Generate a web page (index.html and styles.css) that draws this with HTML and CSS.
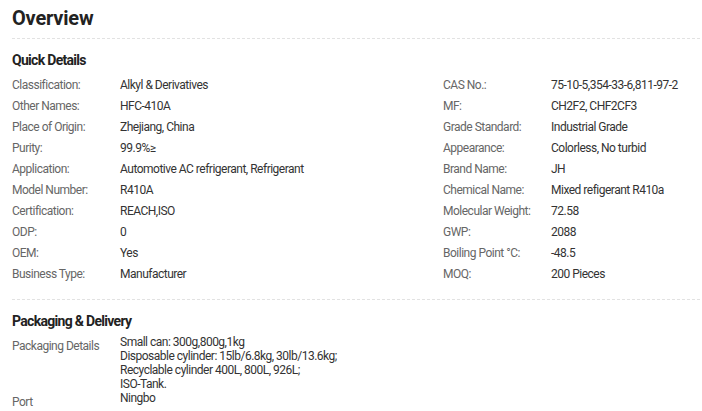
FILE: index.html
```html
<!DOCTYPE html>
<html lang="en">
<head>
  <meta charset="UTF-8">
  <title>Overview</title>
  <link rel="stylesheet" href="styles.css">
</head>
<body>
  <div class="overview">
    <h1 class="title">Overview</h1>

    <div class="section">
      <h2>Quick Details</h2>
      <div class="details">
        <div class="col">
          <div class="row"><span class="label">Classification:</span><span class="value">Alkyl &amp; Derivatives</span></div>
          <div class="row"><span class="label">Other Names:</span><span class="value">HFC-410A</span></div>
          <div class="row"><span class="label">Place of Origin:</span><span class="value">Zhejiang, China</span></div>
          <div class="row"><span class="label">Purity:</span><span class="value">99.9%≥</span></div>
          <div class="row"><span class="label">Application:</span><span class="value">Automotive AC refrigerant, Refrigerant</span></div>
          <div class="row"><span class="label">Model Number:</span><span class="value">R410A</span></div>
          <div class="row"><span class="label">Certification:</span><span class="value">REACH,ISO</span></div>
          <div class="row"><span class="label">ODP:</span><span class="value">0</span></div>
          <div class="row"><span class="label">OEM:</span><span class="value">Yes</span></div>
          <div class="row"><span class="label">Business Type:</span><span class="value">Manufacturer</span></div>
        </div>
        <div class="col">
          <div class="row"><span class="label">CAS No.:</span><span class="value">75-10-5,354-33-6,811-97-2</span></div>
          <div class="row"><span class="label">MF:</span><span class="value">CH2F2, CHF2CF3</span></div>
          <div class="row"><span class="label">Grade Standard:</span><span class="value">Industrial Grade</span></div>
          <div class="row"><span class="label">Appearance:</span><span class="value">Colorless, No turbid</span></div>
          <div class="row"><span class="label">Brand Name:</span><span class="value">JH</span></div>
          <div class="row"><span class="label">Chemical Name:</span><span class="value">Mixed refigerant R410a</span></div>
          <div class="row"><span class="label">Molecular Weight:</span><span class="value">72.58</span></div>
          <div class="row"><span class="label">GWP:</span><span class="value">2088</span></div>
          <div class="row"><span class="label">Boiling Point °C:</span><span class="value">-48.5</span></div>
          <div class="row"><span class="label">MOQ:</span><span class="value">200 Pieces</span></div>
        </div>
      </div>
    </div>

    <div class="section packaging">
      <h2>Packaging &amp; Delivery</h2>
      <div class="pack-row">
        <span class="label">Packaging Details</span>
        <span class="value">Small can: 300g,800g,1kg<br>Disposable cylinder: 15lb/6.8kg, 30lb/13.6kg;<br>Recyclable cylinder 400L, 800L, 926L;<br>ISO-Tank.</span>
      </div>
      <div class="pack-row">
        <span class="label">Port</span>
        <span class="value">Ningbo</span>
      </div>
    </div>
  </div>
</body>
</html>
```

FILE: styles.css
```css
* {
  margin: 0;
  padding: 0;
  box-sizing: border-box;
}

body {
  background: #fff;
  font-family: Roboto, "Liberation Sans", sans-serif;
  color: #333;
}

.overview {
  padding: 0 2px 0 12px;
}

.title {
  font-size: 20px;
  font-weight: 700;
  line-height: 24px;
  letter-spacing: -0.2px;
  padding-top: 6px;
  height: 39px;
  color: #222;
  border-bottom: 1px dashed #e2e2e2;
}

.section h2 {
  font-size: 14px;
  font-weight: 700;
  line-height: 20px;
  letter-spacing: -0.7px;
  color: #222;
}

.section {
  padding-top: 11px;
}

.details {
  display: grid;
  grid-template-columns: 431px 1fr;
  padding: 5px 0 14px;
  border-bottom: 1px dashed #e2e2e2;
}

.row {
  display: flex;
  font-size: 12px;
  line-height: 21px;
  letter-spacing: -0.5px;
}

.label {
  width: 108px;
  flex-shrink: 0;
  color: #666;
}

.value {
  color: #333;
}

.packaging {
  padding-top: 11px;
}

.packaging h2 {
  margin-bottom: 4px;
}

.pack-row {
  display: flex;
  font-size: 12px;
  line-height: 14px;
  letter-spacing: -0.5px;
}

.pack-row .label {
  padding-top: 4px;
}
```
